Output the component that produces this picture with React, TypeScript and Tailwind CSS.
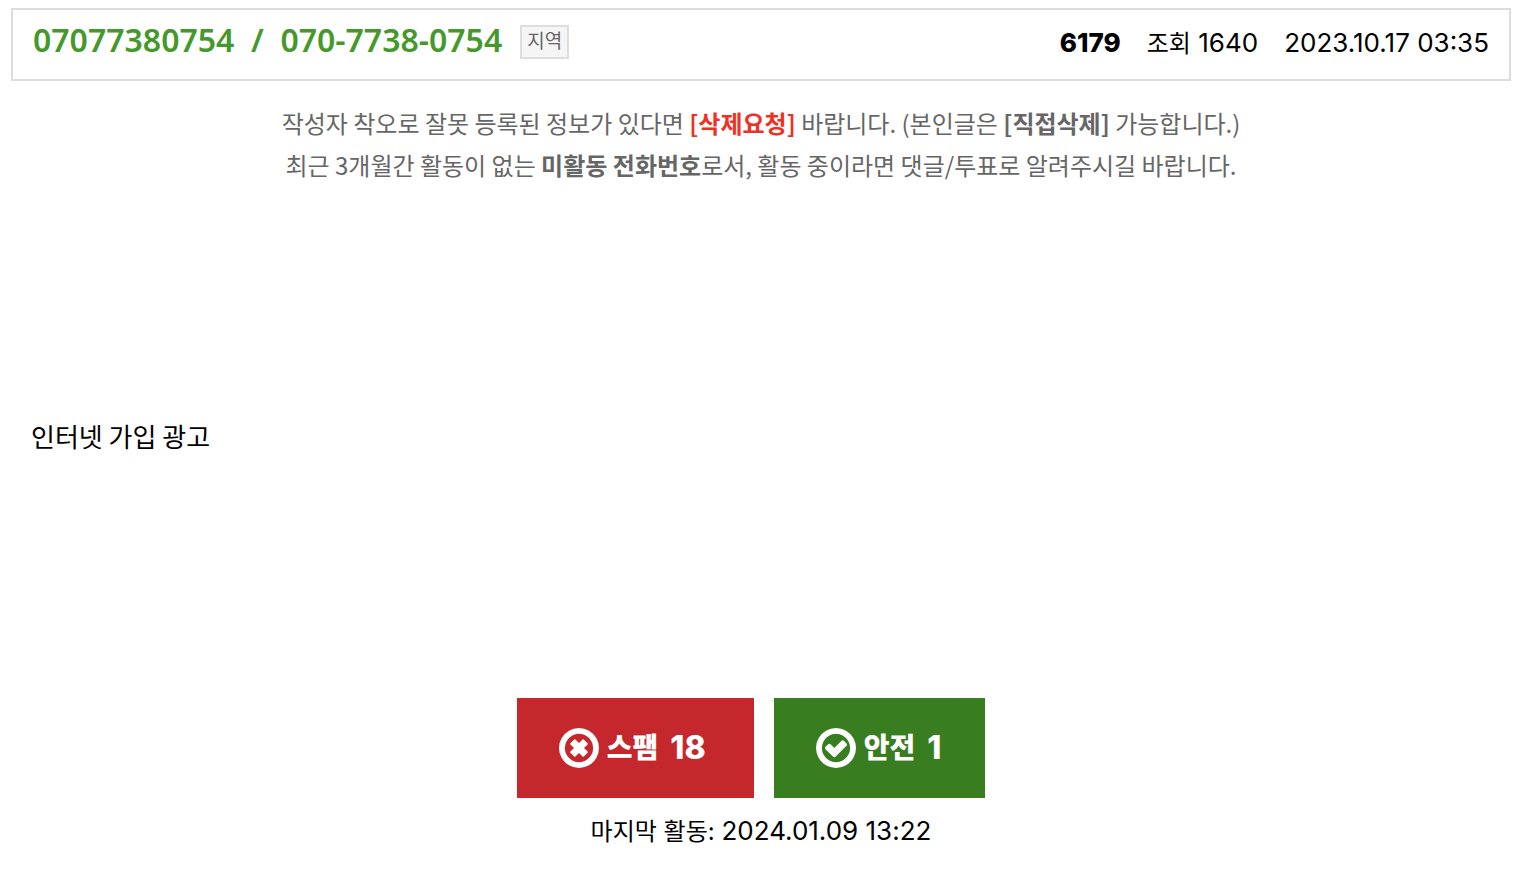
interface VoteIconProps {
    mark: string;
}

const RING = "M1440 896q0-148-73-273t-198-198-273-73-273 73-198 198-73 273 73 273 198 198 273 73 273-73 198-198 73-273zm224 0q0 209-103 385.5t-279.5 279.5-385.5 103-385.5-103-279.5-279.5-103-385.5 103-385.5 279.5-279.5 385.5-103 385.5 103 279.5 279.5 103 385.5z";
const CROSS = "M1225 1079l-146 146q-10 10-23 10t-23-10l-137-137-137 137q-10 10-23 10t-23-10l-146-146q-10-10-10-23t10-23l137-137-137-137q-10-10-10-23t10-23l146-146q10-10 23-10t23 10l137 137 137-137q10-10 23-10t23 10l146 146q10 10 10 23t-10 23l-137 137 137 137q10 10 10 23t-10 23z";
const CHECK = "M1299 813l-422 422q-19 19-45 19t-45-19l-294-294q-19-19-19-45t19-45l102-102q19-19 45-19t45 19l147 147 275-275q19-19 45-19t45 19l102 102q19 19 19 45t-19 45z";

const VoteIcon = ({ mark }: VoteIconProps) => (
    <svg viewBox="128 128 1536 1536" className="mr-2 size-10" fill="currentColor" aria-hidden="true">
        <path d={RING} />
        <path d={mark} />
    </svg>
);

const App = () => {
    return (
        <main className="min-h-screen bg-white pt-2 pr-[17px] pl-[11px] text-2xl text-black font-['Inter','Noto_Sans_CJK_KR',sans-serif]">
            <header className="flex items-start justify-between border-2 border-[#dddddd] px-5 pt-[10px] pb-[18px]">
                <div className="flex items-start gap-[18px]">
                    <h1 className="whitespace-pre text-[32px] leading-10 font-semibold text-[#45992b] font-['Noto_Sans',sans-serif]">07077380754  /  070-7738-0754</h1>
                    <span className="mt-[5px] border-2 border-[#dddddd] bg-[#f5f5f5] px-[5px] text-[19px] leading-[30px] text-[#666666]">지역</span>
                </div>
                <div className="flex gap-[26px] pt-[5px] text-[26px] leading-9">
                    <strong className="font-extrabold">6179</strong>
                    <span><span className="text-2xl">조회</span> 1640</span>
                    <time>2023.10.17 03:35</time>
                </div>
            </header>

            <section className="mt-[21px] text-center leading-[42px] text-[#666666] font-['Noto_Sans_CJK_KR',sans-serif]">
                <p>작성자 착오로 잘못 등록된 정보가 있다면 <a href="#delete" className="font-bold text-[#ee3124]">[삭제요청]</a> 바랍니다. (본인글은 <a href="#direct" className="font-bold">[직접삭제]</a> 가능합니다.)</p>
                <p>최근 3개월간 활동이 없는 <strong>미활동 전화번호</strong>로서, 활동 중이라면 댓글/투표로 알려주시길 바랍니다.</p>
            </section>

            <p className="mt-[230px] px-5 text-[26px] leading-10 font-['Noto_Sans_CJK_KR',sans-serif]">인터넷 가입 광고</p>

            <div className="mt-[242px] flex justify-center">
                <button className="mr-5 flex items-center bg-[#c4282d] py-[30px] pr-12 pl-[42px] text-[28px] leading-10 font-extrabold text-white">
                    <VoteIcon mark={CROSS} />
                    <span className="mr-3">스팸</span>
                    <span className="text-[32px]">18</span>
                </button>
                <button className="mr-5 flex items-center bg-[#397d21] py-[30px] pr-11 pl-[42px] text-[28px] leading-10 font-extrabold text-white">
                    <VoteIcon mark={CHECK} />
                    <span className="mr-3">안전</span>
                    <span className="text-[32px]">1</span>
                </button>
            </div>
            <p className="mt-[15px] text-center leading-9">마지막 활동: <time className="text-[26px]">2024.01.09 13:22</time></p>
        </main>
    );
};

export default App;
